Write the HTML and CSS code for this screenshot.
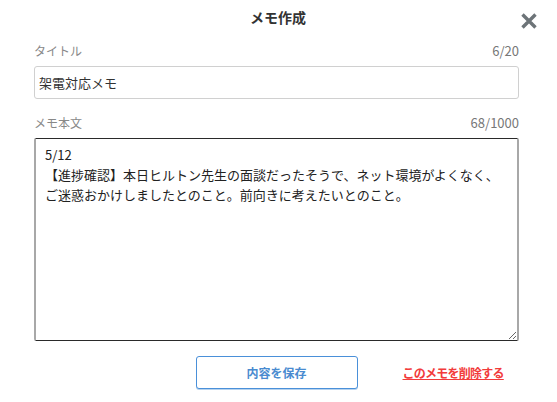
FILE: index.html
```html
<!DOCTYPE html>
<html lang="ja">
<head>
<meta charset="utf-8">
<title>メモ作成</title>
<link rel="stylesheet" href="styles.css">
</head>
<body>
<div class="modal">
  <header class="modal-head">
    <h1 class="modal-title">メモ作成</h1>
    <button class="close" aria-label="閉じる">
      <svg viewBox="0 0 18 18" width="18" height="18"><path d="M2.5 2.5 L15.5 15.5 M15.5 2.5 L2.5 15.5" stroke="#6d7478" stroke-width="3.4" stroke-linecap="butt"/></svg>
    </button>
  </header>
  <div class="field">
    <div class="field-label"><span>タイトル</span><span class="count">6/20</span></div>
    <input class="input" type="text" value="架電対応メモ">
  </div>
  <div class="field">
    <div class="field-label"><span>メモ本文</span><span class="count">68/1000</span></div>
    <textarea class="textarea">5/12
【進捗確認】本日ヒルトン先生の面談だったそうで、ネット環境がよくなく、ご迷惑おかけしましたとのこと。前向きに考えたいとのこと。</textarea>
  </div>
  <div class="actions">
    <span></span>
    <button class="save">内容を保存</button>
    <a class="delete" href="#">このメモを削除する</a>
  </div>
</div>
</body>
</html>
```
FILE: styles.css
```css
html, body {
  margin: 0;
  padding: 0;
  background: #fff;
}
body {
  font-family: "Noto Sans CJK JP", "Noto Sans", sans-serif;
  color: #333;
}
.modal {
  width: 557px;
  height: 402px;
  box-sizing: border-box;
  padding: 0 38px 0 34px;
}
.modal-head {
  position: relative;
  height: 42px;
}
.modal-title {
  margin: 0;
  padding-top: 6px;
  padding-left: 3px;
  text-align: center;
  font-size: 14px;
  line-height: 22px;
  font-weight: 700;
  color: #333;
}
.close {
  position: absolute;
  right: -19px;
  top: 12px;
  width: 18px;
  height: 18px;
  padding: 0;
  border: 0;
  background: none;
}
.close svg { display: block; }
.field-label {
  display: flex;
  justify-content: space-between;
  align-items: center;
  font-size: 12px;
  line-height: 18px;
  color: #888;
  margin-bottom: 6px;
}
.count {
  color: #777;
  font-size: 13px;
}
.input {
  display: block;
  width: 100%;
  box-sizing: border-box;
  height: 33px;
  border: 1px solid #d0d0d0;
  border-radius: 3px;
  padding: 0 4px;
  font-family: inherit;
  font-size: 13px;
  color: #333;
  outline: none;
  margin-bottom: 15px;
}
.textarea {
  display: block;
  width: 100%;
  box-sizing: border-box;
  height: 203px;
  border-style: solid;
  border-width: 1px 2px;
  border-color: #2a2a2a #a8a8a8;
  border-radius: 2px;
  padding: 6px 9px;
  font-family: inherit;
  font-size: 13px;
  line-height: 20px;
  color: #222;
  outline: none;
  resize: both;
}
.actions {
  display: grid;
  grid-template-columns: 1fr auto 1fr;
  align-items: center;
  margin-top: 15px;
}
.save {
  width: 162px;
  height: 33px;
  box-sizing: border-box;
  border: 1px solid #4a90d9;
  border-radius: 3px;
  background: #fff;
  box-shadow: 0 1px 0 #b7d3ef;
  color: #4a8bd0;
  font-family: inherit;
  font-size: 12px;
  font-weight: 700;
}
.delete {
  justify-self: start;
  margin-left: 45px;
  color: #f23b3b;
  font-size: 12px;
  letter-spacing: -0.75px;
  font-weight: 700;
  text-decoration: underline;
}
```
